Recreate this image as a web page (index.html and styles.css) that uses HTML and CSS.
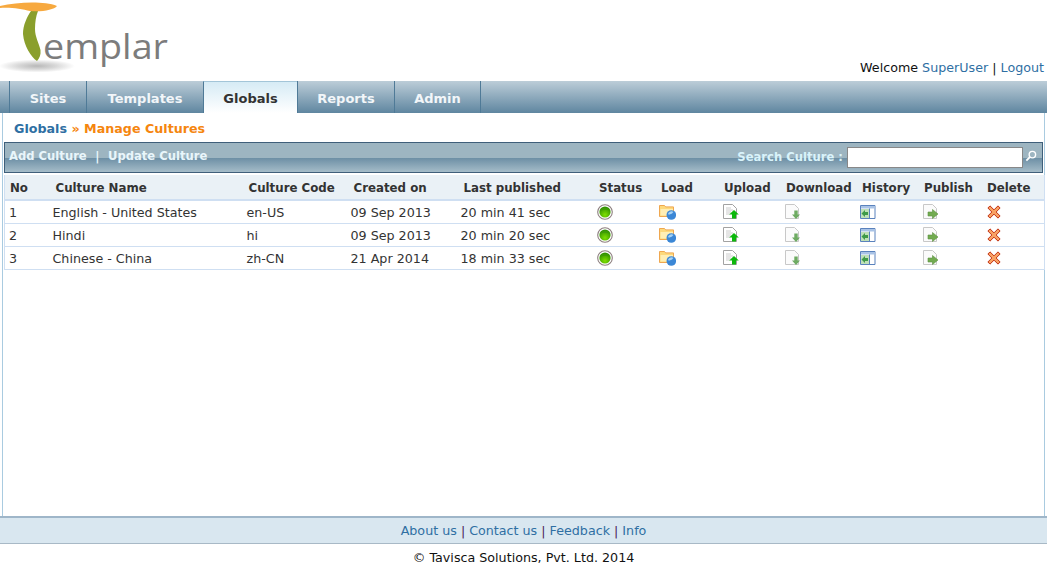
FILE: index.html
```html
<!DOCTYPE html>
<html lang="en">

<head>
    <meta charset="UTF-8">
    <title>Templar - Manage Cultures</title>
    <link rel="stylesheet" href="styles.css">
</head>

<body>
    <svg class="defs" width="0" height="0">
        <defs>
            <radialGradient id="shadowFill">
                <stop offset="0" stop-color="#b8b8b8"/>
                <stop offset="0.5" stop-color="#d8d8d8"/>
                <stop offset="1" stop-color="#fff"/>
            </radialGradient>
            <radialGradient id="ballFill" cx="0.5" cy="0.75" r="0.7">
                <stop offset="0" stop-color="#7fe000"/>
                <stop offset="1" stop-color="#2f8f00"/>
            </radialGradient>
            <symbol id="icoStatus" viewBox="0 0 16 16">
                <circle cx="8" cy="8" r="7.3" fill="#fff" stroke="#8d7f7f" stroke-width="1.1"/>
                <circle cx="8" cy="8" r="5.6" fill="url(#ballFill)"/>
                <path d="M3.6 6.6C5 3 11 3 12.4 6.6 10 5.6 6 5.6 3.6 6.6Z" fill="#3e9a08"/>
            </symbol>
            <symbol id="icoLoad" viewBox="0 0 17 16">
                <path d="M.5 1.500h5l1.200 1.400h7.800v9.600H.5Z" fill="#fdd97c" stroke="#efa750"/>
                <path d="M1.500 5h12.500v6.500H1.500Z" fill="#ffeeb5"/>
                <circle cx="12.300" cy="11" r="4.800" fill="#3b87d6"/>
                <path d="M9 10c1-2.500 3.500-3.500 5.500-2-1 .5-1.500 2.500-3 2-.5 1-2 .5-2.500 0Z" fill="#a5d2f5"/>
            </symbol>
            <symbol id="icoUpload" viewBox="0 0 16 16">
                <path d="M.5.500h9l4 4v10H.500Z" fill="#fff" stroke="#a2a2a2"/>
                <path d="M3 4h5M3 6h7M3 8h5M3 10h4" stroke="#ccc"/>
                <path d="M11 6l4.800 4.500h-2.800v4h-4v-4H6.200Z" fill="#0cb80c"/>
            </symbol>
            <symbol id="icoDownload" viewBox="0 0 16 16">
                <path d="M.5.500h9l4 4v10H.500Z" fill="#fbfbfb" stroke="#c8c8c8"/>
                <path d="M9.300 6.500h3.400v4h2.300L11 15l-4-4.500h2.300Z" fill="#6eab62"/>
            </symbol>
            <symbol id="icoHistory" viewBox="0 0 16 14">
                <path d="M.5.500h14.500v13H.5Z" fill="#fff" stroke="#5a82bd"/>
                <path d="M1 1h13.500v2.500H1Z" fill="#a9c3e6"/>
                <path d="M1 4h8.500v9H1Z" fill="#bfe0b8"/>
                <path d="M9.500 3.500v10" stroke="#5a82bd"/>
                <path d="M1.500 8.500l3.500-3.500v2h3v3H5v2Z" fill="#3f9a48"/>
            </symbol>
            <symbol id="icoPublish" viewBox="0 0 16 16">
                <path d="M.5.500h9l4 4v10H.500Z" fill="#fbfbfb" stroke="#c8c8c8"/>
                <path d="M5 8h4.500V5.500L15 10l-5.500 4.500V12H5Z" fill="#72ab50" stroke="#5a9140" stroke-width=".6"/>
            </symbol>
            <symbol id="icoDelete" viewBox="0 0 13 13">
                <path d="M.8 2.800l2-2 3.700 3.700L10.200.8l2 2-3.700 3.700 3.700 3.700-2 2-3.700-3.700-3.700 3.700-2-2 3.700-3.700Z" fill="#f9a263" stroke="#b81c00" stroke-width=".8"/>
            </symbol>
        </defs>
    </svg>

    <div class="page">
        <header class="top">
            <svg class="logo" width="175" height="78" viewBox="0 0 175 78">
                <ellipse cx="37" cy="66" rx="38" ry="6.500" fill="url(#shadowFill)"/>
                <path d="M31 11C27 17 23 25 23 34 24 46 31 57 37 61 39.500 58 41 55 40.500 50 39 43 35 37 35 29 35 22 36 16 38 11Z" fill="#8a9f2c"/>
                <path d="M0 6C18 2 44 1 57 6 54 10 42 12 30 11 22 9 10 7 0 8Z" fill="#f7a93f"/>
                <text x="43" y="59" class="logo-text" textLength="125" lengthAdjust="spacingAndGlyphs">emplar</text>
            </svg>
            <div class="welcome">Welcome <a href="#">SuperUser</a> | <a href="#">Logout</a></div>
        </header>

        <nav class="tabs">
            <a class="tab tab-sites" href="#">Sites</a>
            <a class="tab tab-templates" href="#">Templates</a>
            <a class="tab tab-globals active" href="#">Globals</a>
            <a class="tab tab-reports" href="#">Reports</a>
            <a class="tab tab-admin" href="#">Admin</a>
        </nav>

        <main class="content">
            <div class="crumbs"><a href="#">Globals</a> <span class="sep">&raquo;</span> <span class="here">Manage Cultures</span></div>

            <div class="toolbar">
                <div class="actions"><a href="#">Add Culture</a><span class="bar">|</span><a href="#">Update Culture</a></div>
                <div class="search">
                    <label for="searchBox">Search Culture :</label>
                    <input type="text" id="searchBox">
                    <svg class="lens" width="12" height="12" viewBox="0 0 13 13">
                        <circle cx="8" cy="5" r="3.500" fill="none" stroke="#fff" stroke-width="1.500"/>
                        <path d="M5.500 7.500L1.500 11.500" stroke="#fff" stroke-width="2"/>
                    </svg>
                </div>
            </div>

            <table class="cultures">
                <colgroup>
                    <col class="c-no"><col class="c-name"><col class="c-code"><col class="c-created"><col class="c-pub">
                    <col class="c-status"><col class="c-load"><col class="c-upload"><col class="c-download">
                    <col class="c-history"><col class="c-publish"><col class="c-delete">
                </colgroup>
                <thead>
                    <tr>
                        <th>No</th><th>Culture Name</th><th>Culture Code</th><th>Created on</th><th>Last published</th>
                        <th>Status</th><th>Load</th><th>Upload</th><th>Download</th><th>History</th><th>Publish</th><th>Delete</th>
                    </tr>
                </thead>
                <tbody>
                    <tr>
                        <td>1</td><td>English - United States</td><td>en-US</td><td>09 Sep 2013</td><td>20 min 41 sec</td>
                        <td><svg class="ico i-status"><use href="#icoStatus"/></svg></td>
                        <td><svg class="ico i-load"><use href="#icoLoad"/></svg></td>
                        <td><svg class="ico i-upload"><use href="#icoUpload"/></svg></td>
                        <td><svg class="ico i-download"><use href="#icoDownload"/></svg></td>
                        <td><svg class="ico i-history"><use href="#icoHistory"/></svg></td>
                        <td><svg class="ico i-publish"><use href="#icoPublish"/></svg></td>
                        <td><svg class="ico i-delete"><use href="#icoDelete"/></svg></td>
                    </tr>
                    <tr>
                        <td>2</td><td>Hindi</td><td>hi</td><td>09 Sep 2013</td><td>20 min 20 sec</td>
                        <td><svg class="ico i-status"><use href="#icoStatus"/></svg></td>
                        <td><svg class="ico i-load"><use href="#icoLoad"/></svg></td>
                        <td><svg class="ico i-upload"><use href="#icoUpload"/></svg></td>
                        <td><svg class="ico i-download"><use href="#icoDownload"/></svg></td>
                        <td><svg class="ico i-history"><use href="#icoHistory"/></svg></td>
                        <td><svg class="ico i-publish"><use href="#icoPublish"/></svg></td>
                        <td><svg class="ico i-delete"><use href="#icoDelete"/></svg></td>
                    </tr>
                    <tr>
                        <td>3</td><td>Chinese - China</td><td>zh-CN</td><td>21 Apr 2014</td><td>18 min 33 sec</td>
                        <td><svg class="ico i-status"><use href="#icoStatus"/></svg></td>
                        <td><svg class="ico i-load"><use href="#icoLoad"/></svg></td>
                        <td><svg class="ico i-upload"><use href="#icoUpload"/></svg></td>
                        <td><svg class="ico i-download"><use href="#icoDownload"/></svg></td>
                        <td><svg class="ico i-history"><use href="#icoHistory"/></svg></td>
                        <td><svg class="ico i-publish"><use href="#icoPublish"/></svg></td>
                        <td><svg class="ico i-delete"><use href="#icoDelete"/></svg></td>
                    </tr>
                </tbody>
            </table>
        </main>

        <div class="footlinks"><a href="#">About us</a> | <a href="#">Contact us</a> | <a href="#">Feedback</a> | <a href="#">Info</a></div>
        <div class="copyright">&copy; Tavisca Solutions, Pvt. Ltd. 2014</div>
    </div>
</body>

</html>
```
FILE: styles.css
```css
html, body {
    margin: 0;
    padding: 0;
    background: #fff;
}

body {
    font-family: "DejaVu Sans", Verdana, sans-serif;
    font-size: 12.7px;
    color: #333;
    overflow: hidden;
}

a {
    color: #2f6fa3;
    text-decoration: none;
}

.defs {
    position: absolute;
}

.page {
    height: 566px;
    display: flex;
    flex-direction: column;
}

/* header */
.top {
    height: 81px;
    display: flex;
    justify-content: space-between;
    align-items: flex-end;
}

.logo {
    display: block;
    align-self: flex-start;
}

.logo-text {
    font-family: "Open Sans", sans-serif;
    font-weight: 400;
    font-size: 34px;
    fill: #7c7c7c;
}

.welcome {
    color: #111;
    line-height: 16px;
    padding: 0 3px 5px 0;
}

/* main tabs */
.tabs {
    height: 32px;
    display: flex;
    padding-left: 9px;
    background: linear-gradient(#bccdd8, #5f86a0);
}

.tab {
    box-sizing: border-box;
    height: 32px;
    line-height: 35px;
    text-align: center;
    font-weight: bold;
    font-size: 13px;
    color: #f2f6f9;
    border-left: 1px solid #4f7a97;
}

.tab-sites { width: 77px; }
.tab-templates { width: 117px; }
.tab-globals { width: 94px; }
.tab-reports { width: 97px; }
.tab-admin { width: 87px; border-right: 1px solid #4f7a97; }

.tab.active {
    color: #333;
    background: linear-gradient(#d6ebf5, #fff);
    border-top: 1px solid #a3c5d8;
    line-height: 33px;
}

/* content */
.content {
    flex: 1;
    margin: 0 2px;
    padding: 0 1px;
    border-left: 1px solid #a9cbe0;
    border-right: 1px solid #a9cbe0;
}

.crumbs {
    height: 29px;
    line-height: 31px;
    padding-left: 10px;
    font-weight: bold;
}

.crumbs .sep, .crumbs .here {
    color: #f5860f;
}

.toolbar {
    box-sizing: border-box;
    height: 31px;
    display: flex;
    justify-content: space-between;
    align-items: center;
    border: 1px solid #3f5f7a;
    background: linear-gradient(#9db5c1 0, #9db5c1 50%, #6d8fa5 52%, #a5bcc8 100%);
    font-size: 11.6px;
    font-weight: bold;
    color: #e9f6fb;
}

.actions {
    padding-left: 4px;
    margin-top: -3px;
}

.actions a {
    color: #e9f6fb;
}

.actions .bar {
    margin: 0 8.5px;
}

.search {
    display: flex;
    align-items: center;
}

.search label {
    margin-right: 4px;
    margin-top: -2px;
    color: #d9f3fb;
}

.search input {
    box-sizing: border-box;
    width: 176px;
    height: 21px;
    padding: 0;
    border: 1px solid #888;
    background: #fff;
}

.lens {
    margin: 0 5px 3px 2px;
}

/* culture table */
.cultures {
    width: 1040px;
    margin-top: 2px;
    table-layout: fixed;
    border-collapse: collapse;
    border-left: 1px solid #cfdff2;
    border-right: 1px solid #cfdff2;
}

.c-no { width: 44px; }
.c-name { width: 194px; }
.c-code { width: 104px; }
.c-created { width: 110px; }
.c-pub { width: 137px; }
.c-status { width: 62px; }
.c-load { width: 63px; }
.c-upload { width: 62px; }
.c-download { width: 76px; }
.c-history { width: 62px; }
.c-publish { width: 63px; }
.c-delete { width: 63px; }

.cultures th {
    box-sizing: border-box;
    height: 25px;
    padding: 1px 0 0 6px;
    text-align: left;
    font-size: 11.8px;
    white-space: nowrap;
    color: #333;
    background: #eaf1f6;
    border-bottom: 2px solid #cfdff2;
}

.cultures th:first-child {
    padding-left: 5px;
}

.cultures th:nth-child(2),
.cultures th:nth-child(4),
.cultures th:nth-child(5) {
    padding-left: 7px;
}

.cultures th:nth-child(n+6) {
    padding-left: 5.5px;
}

.cultures td {
    height: 22px;
    padding: 0 0 0 4px;
    white-space: nowrap;
    border-bottom: 1px solid #cfdff2;
}

.ico {
    display: block;
    width: 16px;
    height: 16px;
}

.i-status { margin-left: -1px; }
.i-load { width: 17px; margin-left: -1px; }
.i-history { margin-left: -1px; }
.i-delete { width: 14px; height: 14px; margin-left: 1px; }

/* footer */
.footlinks {
    box-sizing: border-box;
    height: 28px;
    line-height: 25px;
    text-align: center;
    color: #4a1a5a;
    background: #d9e7f0;
    border-top: 2px solid #9fb6c9;
    border-bottom: 1px solid #a8b9c6;
}

.copyright {
    height: 22px;
    line-height: 27px;
    text-align: center;
    color: #111;
}
```
